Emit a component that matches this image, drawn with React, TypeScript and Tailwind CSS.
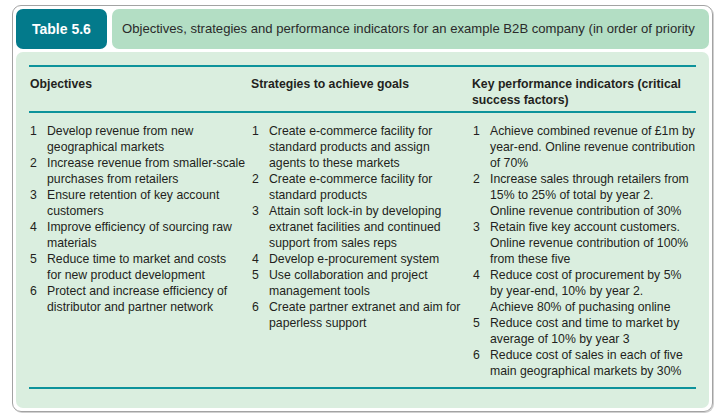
import React from "react";

const objectives: string[][] = [
  ["Develop revenue from new", "geographical markets"],
  ["Increase revenue from smaller-scale", "purchases from retailers"],
  ["Ensure retention of key account", "customers"],
  ["Improve efficiency of sourcing raw", "materials"],
  ["Reduce time to market and costs", "for new product development"],
  ["Protect and increase efficiency of", "distributor and partner network"],
];

const strategies: string[][] = [
  ["Create e-commerce facility for", "standard products and assign", "agents to these markets"],
  ["Create e-commerce facility for", "standard products"],
  ["Attain soft lock-in by developing", "extranet facilities and continued", "support from sales reps"],
  ["Develop e-procurement system"],
  ["Use collaboration and project", "management tools"],
  ["Create partner extranet and aim for", "paperless support"],
];

const kpis: string[][] = [
  ["Achieve combined revenue of £1m by", "year-end. Online revenue contribution", "of 70%"],
  ["Increase sales through retailers from", "15% to 25% of total by year 2.", "Online revenue contribution of 30%"],
  ["Retain five key account customers.", "Online revenue contribution of 100%", "from these five"],
  ["Reduce cost of procurement by 5%", "by year-end, 10% by year 2.", "Achieve 80% of puchasing online"],
  ["Reduce cost and time to market by", "average of 10% by year 3"],
  ["Reduce cost of sales in each of five", "main geographical markets by 30%"],
];

function List({ items }: { items: string[][] }) {
  return (
    <div className="flex flex-col">
      {items.map((lines, i) => (
        <div key={i} className="flex">
          <div className="w-[18px] shrink-0 pl-[1px]">{i + 1}</div>
          <div className="flex flex-col">
            {lines.map((l, j) => (
              <div key={j} className="whitespace-nowrap">
                {l}
              </div>
            ))}
          </div>
        </div>
      ))}
    </div>
  );
}

export default function App() {
  return (
    <div
      className="w-[723px] h-[414px] bg-white pt-[5px] pl-[12px]"
      style={{ fontFamily: '"Liberation Sans", Arial, sans-serif' }}
    >
      <div className="w-[701px] h-[407px] border border-[#a3a3a3] rounded-[9px] p-[3px] flex flex-col gap-[3px] shadow-[1px_1px_0_#d0d0d0]">
        <div className="flex gap-[5px] h-[40px] shrink-0">
          <div className="w-[91px] bg-[#037a8b] rounded-[7px] flex items-center pl-[16px] text-white font-bold text-[14px]">
            Table 5.6
          </div>
          <div className="flex-1 bg-[#b3dec4] rounded-[7px] flex items-center pl-[10px] text-[#2a2a2a] text-[13.1px] whitespace-nowrap overflow-hidden">
            Objectives, strategies and performance indicators for an example B2B company (in order of priority
          </div>
        </div>
        <div className="flex-1 bg-[#daeedf] rounded-[7px] px-[13px] pt-[13px] text-[12.25px] leading-[16px] text-[#231f20]">
          <div className="h-[2px] bg-[#0d939b]" />
          <div className="grid grid-cols-[221px_221px_1fr] font-bold pt-[9px] pb-[3px] pl-[1px]">
            <div>Objectives</div>
            <div>Strategies to achieve goals</div>
            <div>
              Key performance indicators (critical
              <br />
              success factors)
            </div>
          </div>
          <div className="h-[2px] bg-[#0d939b]" />
          <div className="grid grid-cols-[221px_221px_1fr] pt-[10px] pb-[8px]">
            <List items={objectives} />
            <div className="pl-[1px]">
              <List items={strategies} />
            </div>
            <div className="pl-[1px]">
              <List items={kpis} />
            </div>
          </div>
          <div className="h-[2px] bg-[#0d939b]" />
        </div>
      </div>
    </div>
  );
}
